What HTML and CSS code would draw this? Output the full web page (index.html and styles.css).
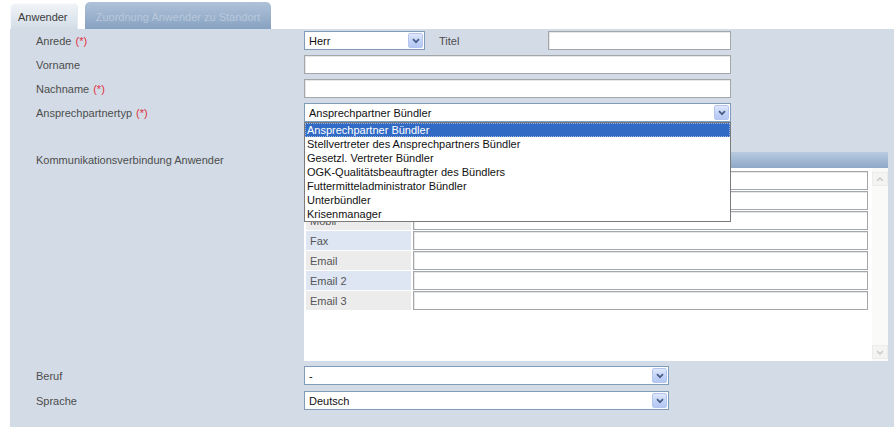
FILE: index.html
```html
<!DOCTYPE html>
<html lang="de">
<head>
<meta charset="utf-8">
<title>Anwender</title>
<link rel="stylesheet" href="styles.css">
</head>
<body>
<div class="tabs">
  <div class="tab tab-active">Anwender</div>
  <div class="tab tab-inactive">Zuordnung Anwender zu Standort</div>
</div>
<div class="panel">
  <div class="form">
    <div class="label">Anrede <span class="req">(*)</span></div>
    <div class="control inline">
      <div class="select sel-small"><span class="value">Herr</span><span class="btn"><svg width="8" height="6" viewBox="0 0 8 6"><path d="M1 1.2 L4 4.2 L7 1.2" fill="none" stroke="#4a5d86" stroke-width="1.7"/></svg></span></div>
      <div class="titel">Titel</div>
      <input class="input titel-input" type="text">
    </div>

    <div class="label">Vorname</div>
    <div class="control"><input class="input wide" type="text"></div>

    <div class="label">Nachname <span class="req">(*)</span></div>
    <div class="control"><input class="input wide" type="text"></div>

    <div class="label">Ansprechpartnertyp <span class="req">(*)</span></div>
    <div class="control">
      <div class="select wide"><span class="value">Ansprechpartner Bündler</span><span class="btn"><svg width="8" height="6" viewBox="0 0 8 6"><path d="M1 1.2 L4 4.2 L7 1.2" fill="none" stroke="#4a5d86" stroke-width="1.7"/></svg></span>
        <ul class="dropdown">
          <li class="selected">Ansprechpartner Bündler</li>
          <li>Stellvertreter des Ansprechpartners Bündler</li>
          <li>Gesetzl. Vertreter Bündler</li>
          <li>OGK-Qualitätsbeauftragter des Bündlers</li>
          <li>Futtermitteladministrator Bündler</li>
          <li>Unterbündler</li>
          <li>Krisenmanager</li>
        </ul>
      </div>
    </div>

    <div class="label label-top comm-gap">Kommunikationsverbindung Anwender</div>
    <div class="control comm-gap">
      <div class="comm">
        <div class="comm-head"></div>
        <div class="comm-body">
          <div class="comm-rows">
            <div class="cell gray"></div><input class="input cin" type="text">
            <div class="cell blue"></div><input class="input cin" type="text">
            <div class="cell gray mobil">Mobil</div><input class="input cin" type="text">
            <div class="cell blue">Fax</div><input class="input cin" type="text">
            <div class="cell gray">Email</div><input class="input cin" type="text">
            <div class="cell blue">Email 2</div><input class="input cin" type="text">
            <div class="cell gray">Email 3</div><input class="input cin" type="text">
          </div>
          <div class="scrollbar">
            <div class="sbtn"><svg width="8" height="5" viewBox="0 0 8 5"><path d="M1 4 L4 1 L7 4" fill="none" stroke="#c9cbcc" stroke-width="1.5"/></svg></div>
            <div class="sbtn"><svg width="8" height="5" viewBox="0 0 8 5"><path d="M1 1 L4 4 L7 1" fill="none" stroke="#c9cbcc" stroke-width="1.5"/></svg></div>
          </div>
        </div>
      </div>
    </div>

    <div class="label">Beruf</div>
    <div class="control">
      <div class="select mid"><span class="value">-</span><span class="btn"><svg width="8" height="6" viewBox="0 0 8 6"><path d="M1 1.2 L4 4.2 L7 1.2" fill="none" stroke="#4a5d86" stroke-width="1.7"/></svg></span></div>
    </div>

    <div class="label last">Sprache</div>
    <div class="control last">
      <div class="select mid"><span class="value">Deutsch</span><span class="btn"><svg width="8" height="6" viewBox="0 0 8 6"><path d="M1 1.2 L4 4.2 L7 1.2" fill="none" stroke="#4a5d86" stroke-width="1.7"/></svg></span></div>
    </div>
  </div>
</div>
</body>
</html>
```

FILE: styles.css
```css
html, body {
  margin: 0;
  padding: 0;
  background: #ffffff;
  overflow: hidden;
}
body {
  width: 894px;
  height: 427px;
  font-family: "Liberation Sans", Arial, sans-serif;
  font-size: 11px;
  color: #444;
}
.tabs {
  display: flex;
  align-items: flex-end;
  height: 29px;
  padding-left: 10px;
  gap: 7px;
}
.tab {
  box-sizing: border-box;
  border-radius: 5px 5px 0 0;
  white-space: nowrap;
}
.tab-active {
  width: 68px;
  height: 26px;
  padding: 8px 0 0 8px;
  color: #3b3b3b;
  background: linear-gradient(#f2f5f8, #dfe6ee 60%, #d3dce6);
  box-shadow: inset 1px 1px 0 #f8fafc, inset -1px 0 0 #e6ecf2;
}
.tab-inactive {
  width: 186px;
  height: 27px;
  padding-top: 9px;
  text-align: center;
  color: #b9c8db;
  background: linear-gradient(#aec1d8, #9ab1cc 55%, #86a1c1);
}
.panel {
  margin-left: 10px;
  height: 398px;
  box-sizing: border-box;
  padding: 2px 0 0 26px;
  background: #d3dce6;
}
.form {
  display: grid;
  grid-template-columns: 268px auto;
  row-gap: 5px;
}
.label {
  display: flex;
  align-items: center;
  height: 19px;
  color: #4d4d4d;
  white-space: nowrap;
}
.label-top {
  align-items: flex-start;
  padding-top: 2px;
}
.req {
  color: #e0303f;
  margin-left: 4px;
}
.comm-gap {
  margin-top: 25px;
}
.last {
  margin-top: 1px;
}
.control {
  position: relative;
}
.inline {
  display: flex;
  align-items: center;
}
.titel {
  width: 123px;
  box-sizing: border-box;
  padding-left: 14px;
  color: #4d4d4d;
}
.input {
  display: block;
  box-sizing: border-box;
  height: 19px;
  margin: 0;
  padding: 0 3px;
  border: 1px solid #a3a7ab;
  box-shadow: inset 1px 1px 0 #e6e6e6;
  background: #fff;
  font: inherit;
  outline: none;
}
.wide {
  width: 427px;
}
.titel-input {
  width: 183px;
}
.select {
  position: relative;
  display: flex;
  align-items: center;
  box-sizing: border-box;
  height: 19px;
  border: 1px solid #7f9db9;
  background: #fff;
  color: #111;
}
.sel-small {
  width: 121px;
}
.mid {
  width: 365px;
}
.select .value {
  flex: 1;
  padding-left: 4px;
  white-space: nowrap;
}
.select .btn {
  width: 15px;
  height: 15px;
  margin-right: 1px;
  box-sizing: border-box;
  display: flex;
  align-items: center;
  justify-content: center;
  border: 1px solid #b4c6ef;
  border-radius: 2px;
  background: linear-gradient(#dfe8fc, #c2d3f7 55%, #b4c8f3);
}
.dropdown {
  position: absolute;
  top: 18px;
  left: -1px;
  z-index: 10;
  width: 427px;
  box-sizing: border-box;
  margin: 0;
  padding: 0;
  list-style: none;
  background: #fff;
  border: 1px solid #7a7a7a;
  color: #111;
}
.dropdown li {
  height: 14px;
  line-height: 14px;
  padding-left: 2px;
  white-space: nowrap;
}
.dropdown li.selected {
  background: #316ac5;
  color: #fff;
  outline: 1px dotted #9db4dc;
  outline-offset: -1px;
}
.comm {
  width: 584px;
  height: 209px;
  display: flex;
  flex-direction: column;
  background: #fff;
}
.comm-head {
  height: 16px;
  background: linear-gradient(#b9cbe0, #9fb6d2 60%, #8ea8c7);
}
.comm-body {
  flex: 1;
  display: flex;
}
.comm-rows {
  flex: 1;
  display: grid;
  grid-template-columns: 105px 455px;
  grid-auto-rows: 19px;
  column-gap: 2px;
  row-gap: 1px;
  align-content: start;
  padding: 3px 0 0 2px;
}
.cell {
  display: flex;
  align-items: center;
  padding-left: 4px;
  color: #555;
}
.cell.mobil {
  padding-top: 4px;
  align-items: flex-start;
}
.cell.blue {
  background: #dde6f2;
}
.cell.gray {
  background: #ececec;
}
.cin {
  width: 455px;
}
.scrollbar {
  width: 16px;
  display: flex;
  flex-direction: column;
  justify-content: space-between;
  padding: 4px 0 2px;
  background: #fafaf8;
}
.sbtn {
  height: 14px;
  box-sizing: border-box;
  display: flex;
  align-items: center;
  justify-content: center;
  border: 1px solid #ececea;
  background: #f4f4f2;
}
```
